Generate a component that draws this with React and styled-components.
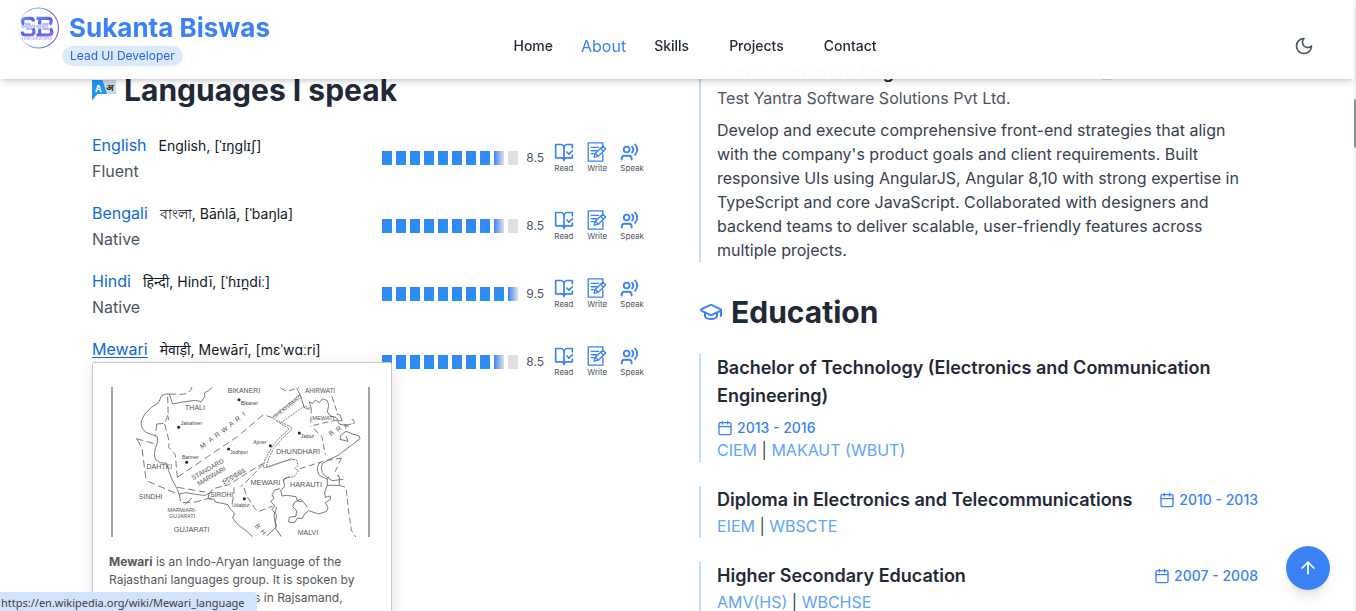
import React from 'react';
import styled, { createGlobalStyle, css } from 'styled-components';

const GlobalStyle = createGlobalStyle`
  *, *::before, *::after { box-sizing: border-box; }
  body { margin: 0; background: #fff; font-family: Inter, "Noto Sans", sans-serif; color: #1f2937; }
  h1, h2, h3, p, ul { margin: 0; padding: 0; }
  ul { list-style: none; }
  a { text-decoration: none; color: inherit; }
  button { border: 0; padding: 0; background: none; cursor: pointer; font: inherit; }
  svg { display: block; flex: none; }
`;

const Page = styled.div`
  position: relative;
  height: 100vh;
  overflow: hidden;
  padding-right: 6px;
`;

/* ---------- header ---------- */

const Header = styled.header`
  position: absolute;
  z-index: 10;
  top: 0;
  left: 0;
  right: 2px;
  height: 79px;
  padding: 0 40px 0 18px;
  display: grid;
  grid-template-columns: 1fr auto 1fr;
  background: rgba(255, 255, 255, 0.97);
  backdrop-filter: blur(16px);
  box-shadow: 0 4px 6px -1px rgba(0, 0, 0, 0.14), 0 2px 4px -2px rgba(0, 0, 0, 0.14);
`;

const Brand = styled.a`
  display: flex;
  align-items: flex-start;
  gap: 2px;
  padding-top: 7px;
`;

const BrandText = styled.div`
  display: flex;
  flex-direction: column;
  align-items: flex-start;
  gap: 2px;
  padding-top: 5px;
`;

const BrandName = styled.h1`
  padding-left: 7px;
  font-size: 26px;
  line-height: 32px;
  font-weight: 700;
  color: #3b82f6;
  white-space: nowrap;
`;

const RolePill = styled.span`
  padding: 0 8px;
  border-radius: 10px;
  background: #dbeafe;
  color: #2563eb;
  font-size: 12px;
  line-height: 20px;
  white-space: nowrap;
`;

const Nav = styled.nav`
  display: flex;
  align-items: center;
  gap: 40px;
  padding: 12px 0 0 58px;
`;

const NavLink = styled.a`
  font-size: 14px;
  font-weight: 500;
  color: #1f2937;
  ${(p) =>
    p.$active &&
    css`
      margin: 0 -12px;
      font-size: 16px;
      font-weight: 400;
      color: #3b82f6;
    `}
`;

const HeaderActions = styled.div`
  display: flex;
  align-items: center;
  justify-content: flex-end;
  padding-top: 13px;
`;

const IconButton = styled.button`
  color: #4b5563;
`;

/* ---------- layout ---------- */

const Main = styled.main`
  max-width: 1166px;
  margin: 0 auto;
  padding-top: 58px;
  display: grid;
  grid-template-columns: 1fr 1fr;
  gap: 48px;
`;

const Languages = styled.section`
  padding-top: 14px;
`;

const SectionTitle = styled.h2`
  display: flex;
  align-items: center;
  gap: 8px;
  margin-bottom: 24px;
  font-size: 30px;
  line-height: 36px;
  font-weight: 700;
  color: #1f2937;
`;

/* ---------- languages ---------- */

const LanguageList = styled.ul`
  display: flex;
  flex-direction: column;
  gap: 16px;
`;

const LanguageRow = styled.li`
  position: relative;
  display: flex;
  align-items: center;
  justify-content: space-between;
  padding-right: 7px;
  line-height: 26px;
`;

const LanguageName = styled.div`
  display: flex;
  align-items: baseline;
  gap: 12px;
  height: 26px;
`;

const LanguageLink = styled.a`
  color: #0d6ad8;
  text-decoration: ${(p) => (p.$hovered ? 'underline' : 'none')};
  text-underline-offset: 2px;
`;

const NativeName = styled.span`
  font-size: 14px;
  color: #111827;
  white-space: nowrap;
`;

const Level = styled.p`
  color: #4b5563;
`;

const Rating = styled.div`
  display: flex;
  align-items: center;
  gap: 8px;
`;

const Bars = styled.div`
  display: flex;
  gap: 4px;
`;

const fills = {
  full: 'linear-gradient(135deg, #3b82f6, #2196f3)',
  half: 'linear-gradient(90deg, #3b82f6, #e0e0e0)',
  empty: '#e0e0e0',
};

const Bar = styled.span`
  width: 10px;
  height: 14px;
  background: ${(p) => fills[p.$fill]};
`;

const Score = styled.span`
  width: 20px;
  font-size: 12px;
  color: #4b5563;
`;

const Skills = styled.div`
  display: flex;
  gap: 13px;
  padding-bottom: 2px;
`;

const Skill = styled.div`
  display: flex;
  flex-direction: column;
  gap: 1px;
  color: #3b82f6;
`;

const SkillLabel = styled.span`
  font-size: 8px;
  line-height: 10px;
  color: #4b5563;
`;

const Preview = styled.aside`
  position: absolute;
  z-index: 2;
  top: 26px;
  left: 0;
  width: 300px;
  padding: 24px 16px;
  border: 1px solid #c8ccd1;
  border-radius: 2px;
  background: #fff;
  box-shadow: 0 4px 16px rgba(0, 0, 0, 0.12);
`;

const PreviewText = styled.p`
  margin-top: 16px;
  font-size: 12px;
  line-height: 18px;
  color: #54595d;
`;

/* ---------- timeline ---------- */

const Timeline = styled.div`
  display: flex;
  flex-direction: column;
  gap: 24px;
`;

const Entry = styled.article`
  padding-left: 16px;
  border-left: 2px solid #bfdbfe;
  line-height: 24px;
`;

const EntryHead = styled.div`
  display: flex;
  flex-wrap: wrap;
  align-items: center;
  justify-content: space-between;
  gap: 8px;
`;

const EntryTitle = styled.h3`
  font-size: 18px;
  line-height: 28px;
  font-weight: 600;
  color: #1f2937;
`;

const Period = styled.span`
  display: flex;
  align-items: center;
  gap: 4px;
  font-size: 14px;
  line-height: 20px;
  font-weight: 500;
  color: #3b82f6;
`;

const Company = styled.p`
  color: #4b5563;
`;

const Description = styled.p`
  margin-top: 8px;
  color: #374151;
`;

const Institution = styled.p`
  color: #374151;
`;

const InstitutionLink = styled.a`
  color: #60a5fa;
`;

const EducationSection = styled.section`
  margin-top: 32px;
`;

/* ---------- overlays ---------- */

const ToTop = styled.button`
  position: absolute;
  z-index: 5;
  right: 26px;
  bottom: 21px;
  width: 44px;
  height: 44px;
  display: grid;
  place-items: center;
  border-radius: 50%;
  background: #3b82f6;
  color: #fff;
  box-shadow: 0 10px 15px -3px rgba(0, 0, 0, 0.1), 0 4px 6px -4px rgba(0, 0, 0, 0.1);
`;

const StatusBar = styled.div`
  position: absolute;
  z-index: 20;
  left: 0;
  bottom: 0;
  width: 257px;
  padding: 3px 0 0 1px;
  border-radius: 0 4px 0 0;
  background: #d3e3fd;
  color: #3c4043;
  font-family: "Noto Sans", sans-serif;
  font-size: 11px;
  line-height: 16px;
  white-space: nowrap;
`;

const ScrollTrack = styled.div`
  position: absolute;
  top: 0;
  right: 0;
  bottom: 0;
  width: 2px;
  padding-top: 99px;
  background: #f3f4f6;
`;

const ScrollThumb = styled.div`
  height: 49px;
  border-radius: 2px 0 0 2px;
  background: #8b93a1;
`;

/* ---------- drawings ---------- */

const Line = ({ size = 24, width = 2, children, ...rest }) => (
  <svg width={size} height={size} viewBox="0 0 24 24" fill="none" stroke="currentColor"
    strokeWidth={width} strokeLinecap="round" strokeLinejoin="round" aria-hidden="true" {...rest}>
    {children}
  </svg>
);

const Logo = () => (
  <svg width="42" height="42" viewBox="0 0 42 42" role="img" aria-label="SB">
    <defs>
      <linearGradient id="ring" x1="0" y1="0" x2="1" y2="0">
        <stop offset="0" stopColor="#e5e7eb" stopOpacity="0.3" />
        <stop offset="0.3" stopColor="#8f9cf5" />
        <stop offset="0.5" stopColor="#4cb4ea" />
        <stop offset="0.8" stopColor="#5b6cf3" />
        <stop offset="1" stopColor="#8b6ff0" />
      </linearGradient>
      <linearGradient id="mono" x1="0" y1="0" x2="1" y2="1">
        <stop offset="0" stopColor="#6f86f7" />
        <stop offset="0.5" stopColor="#4f63f0" />
        <stop offset="1" stopColor="#8a6cf2" />
      </linearGradient>
    </defs>
    <circle cx="20.5" cy="21" r="20" fill="#fff" stroke="url(#ring)" strokeWidth="1.2" />
    <g fill="none" stroke="url(#mono)" strokeWidth="3.2">
      <path d="M15.500 14.500q0-3.200-3-3.200H7.800q-3.200 0-3.200 3 0 2.400 1.400 3.200" />
      <path d="M4.200 24.500q0 3.500 3.200 3.500h5.400q3.200 0 3.200-3.200 0-2.500-1.300-3.300" />
      <path d="M18.500 11.300h12q2.700 0 2.700 2.700 0 2.200-1.600 3.400M21.700 12v5.500" />
      <path d="M18.500 28h12.400q2.900 0 2.900-3 0-2.500-1.600-3.500M21.700 21.500V28" />
    </g>
    <path d="M7 17h6M24.500 17h6M8 22h6M24.500 22h7" stroke="#6478f5" strokeWidth="1.2" />
    <text x="3" y="20.600" fontSize="3" fontWeight="700" fill="#8f9ff9">SUKANTA BISWAS</text>
    <text x="4" y="32.500" fontSize="3" fontWeight="600" fill="#9aa6f8">LEAD UI DEVELOPER</text>
  </svg>
);

const TranslateIcon = () => (
  <svg width="24" height="24" viewBox="0 0 24 24" aria-hidden="true">
    <path d="M9 2h15v14H12z" fill="#cfd8dc" />
    <path d="M0 2h10.500l4.500 14H5.500L0 22.500z" fill="#2196f3" />
    <text x="3" y="13.500" fontSize="9" fontWeight="700" fill="#fff">A</text>
    <text x="14" y="12.500" fontSize="9" fill="#263238" fontFamily='"Noto Sans", sans-serif'>अ</text>
  </svg>
);

const ReadIcon = () => (
  <Line size={20}>
    <path d="M12 22.500V7a4 4 0 0 0-4-4H2v16h7q3 0 3 3q0-3 3-3h7v-3" />
    <path d="M12 7a4 4 0 0 1 4-4h6v4" />
    <path d="m15.500 12 2.500 2.500 4-4" />
  </Line>
);

const WriteIcon = () => (
  <Line size={20} width={1.6}>
    <path d="M19 5.500V1H1.500v22H19v-9" />
    <path d="M5 6.500h9M5 10.500h7M5 14h4" />
    <path d="m10 13.500 9-8.500 3.500 3.500-9 8.500-5 1.500z" />
    <path d="m16.500 7.500 3.500 3.500M10 13.500l3.500 3.500" />
  </Line>
);

const SpeakIcon = () => (
  <Line size={20} width={2.2}>
    <circle cx="8" cy="9" r="3.500" />
    <path d="M2 21v-1q0-3.500 3.500-3.500h5q3.500 0 3.500 3.500v1" />
    <path d="M14.500 5.500q3 3.500 0 7M18 3q5.500 6 0 12.500" />
  </Line>
);

const CalendarIcon = () => (
  <Line size={16}>
    <path d="M8 2v4M16 2v4M3 10h18" />
    <rect x="3" y="4" width="18" height="18" rx="2" />
  </Line>
);

const CapIcon = () => (
  <Line size={24} style={{ color: '#3b82f6' }}>
    <path d="M21.420 10.922a1 1 0 0 0-.019-1.838L12.830 5.180a2 2 0 0 0-1.660 0L2.600 9.080a1 1 0 0 0 0 1.832l8.570 3.908a2 2 0 0 0 1.660 0z" />
    <path d="M22 10v6M6 12.500V16a6 3 0 0 0 12 0v-3.500" />
  </Line>
);

const regions = [
  [462, 100, 'BIKANERI', 21], [315, 150, 'THALI', 21], [690, 98, 'AHIRWATI', 19], [700, 181, 'MEWATI', 17],
  [624, 283, 'DHUNDHARI', 22], [526, 374, 'MEWARI', 22], [648, 382, 'HARAUTI', 22], [208, 328, 'DAHTKI', 21],
  [182, 416, 'SINDHI', 21], [395, 410, 'SIROHI', 20], [276, 457, 'MARWARI-', 17], [276, 473, 'GUJARATI', 16],
  [305, 516, 'GUJARATI', 22], [654, 524, 'MALVI', 21],
];
const towns = [
  [447, 119, 453, 134, 'Bikaner'], [266, 202, 272, 195, 'Jaisalmer'], [290, 307, 276, 297, 'Barmer'],
  [416, 267, 420, 283, 'Jodhpur'], [541, 257, 490, 252, 'Ajmer'], [628, 219, 632, 235, 'Jaipur'], [463, 416, 426, 440, 'Udaipur'],
];
const letters = [
  ['M', 343, 262], ['A', 366, 244], ['R', 385, 230], ['W', 407, 214], ['A', 428, 197], ['R', 447, 182], ['I', 465, 166],
  ['B', 728, 224], ['R', 750, 212], ['A', 772, 203], ['J', 793, 190], ['B', 498, 503], ['H', 515, 521],
];

const DialectMap = () => (
  <svg width="266" height="150" viewBox="57 81 798 450" role="img" aria-label="Map of Rajasthani dialects"
    fill="none" stroke="#666" strokeWidth="2.600" fontFamily='"Liberation Sans", sans-serif'>
    <path d="M66 81v450M837 81v450" strokeWidth="4" stroke="#777" />
    <path d="M238 102q-16-2-24 6l-8 20-22 14q-24 20-30 40-4 24 16 36l22 8 10 4v20l-6 16q-6 24 2 34l12 8 20 2 6 22 10 26 16 30 5 14" />
    <path d="M238 102l10 30 30-6 38-5 18 4 10-15v-12l12-6 12-11M268 402l20-4 34 6 24 2 14-8" />
    <path d="M238 102l34 1q28 0 34-22M233 110l2 70M200 192l24-2 12-32M200 192l-3 34M224 192l14 54-2 16 20 22 2 26 4 42" strokeDasharray="20 10" />
    <path d="M138 236l60 16M142 238l14 28 12 92 10 8 80 34M262 352l180-122 78-66 30 10M262 382l84 14M268 402l4 26 44-2 44-12 10 8" strokeDasharray="22 11" />
    <path d="M572 84l18 10 20-6 18-5M726 110l14 42M670 196l26-6 46-10M664 142l-2 58M672 206l24 26 10 52M754 294l-18 40 12 16M630 326l76-24 50-8M748 376l20 6 8 72 8 56 14 22" strokeDasharray="18 10" />
    <path d="M620 84l12 24 10 34 14 6 6-8-4-14 10 4 8-10 12 8 10-12 14 6 4 14-4 20 10 12 16 4 8 10 10 0-6-18-10-2M740 180l8 12 16 4 20-4" />
    <path d="M752 226l16-12 20 8 20 6 2 8-26 20-40 30-36 18-10 6q-10 20 6 36l22 16 34-4M752 226l-2 12 24 6-6-16" />
    <path d="M692 306q-18 16-4 40l24 12 4-8M712 358v18h36v-24l-6-6M712 376l-8 20 2 16 14-4 2 10-16 10 8 14-4 12-24 8-30-10-12 10-8 14-14-2-8 14-18-2 2-14 20-4 2-16-12-12 6-14 18-8 10 10 10 14" />
    <path d="M636 426l-14-4-4-12-28-4-14 2-4-18 12-10-4-22 18-8" />
    <path d="M356 404l-2 12 18 2 4 8 20 4 18 4 6 12 14 14-6 14 18 22 22 16 20 18M570 386l-16 4-8 14 6 12-10 8 12 14-8 10 14 18-4 20 4 14-30 28M556 504l18 26M560 440l-8 28 6 34" />
    <path d="M356 404l14-18 46-12 80-50 24-14M432 382v20l-6 30M520 312l-46 48-22 20M462 384l8 24 26 40 12 6 40-16" strokeDasharray="20 9" />
    <path d="M396 366l60-40 10 8-60 38z" strokeDasharray="8 6" />
    <path d="M548 172l84-70M572 188l72-50 12 4M550 176l56 26-2 8-32 30-22 26-14 30-8 28 76-28 16 4 4 16-10 10 12 6-14 18-26 4-6 10M560 184l38 22-34 32-20 26-20 36-4 24 70-22 26-4" strokeWidth="2.500" strokeDasharray="6 3" />
    <path d="M284 434l22-20" />
    {towns.map(([cx, cy, x, y, t]) => (
      <g key={t}>
        <circle cx={cx} cy={cy} r="4.500" fill="#222" stroke="none" />
        <text x={x} y={y} fontSize="15" fill="#444" stroke="none">{t}</text>
      </g>
    ))}
    <g fill="#555" stroke="none" textAnchor="middle">
      {regions.map(([x, y, t, s]) => (
        <text key={t + y} x={x} y={y} fontSize={s}>{t}</text>
      ))}
      {letters.map(([t, x, y]) => (
        <text key={x} fontSize="20" transform={`translate(${x} ${y}) rotate(${x > 490 && x < 520 ? 50 : -36})`}>{t}</text>
      ))}
      <text fontSize="20" transform="translate(356 334) rotate(-30)">STANDARD</text>
      <text fontSize="20" transform="translate(368 354) rotate(-30)">MARWARI</text>
      <text fontSize="15" transform="translate(434 352) rotate(-26)">GODWARI</text>
      <text fontSize="16" transform="translate(595 144) rotate(-38)">SHEKHAWATI</text>
    </g>
  </svg>
);

/* ---------- data ---------- */

const navItems = ['Home', 'About', 'Skills', 'Projects', 'Contact'];

const languages = [
  { name: 'English', native: 'English, [ˈɪŋglɪʃ]', level: 'Fluent', score: 8.5 },
  { name: 'Bengali', native: 'বাংলা, Bāṅlā, [ˈbaŋla]', level: 'Native', score: 8.5 },
  { name: 'Hindi', native: 'हिन्दी, Hindī, [ˈɦɪn̪diː]', level: 'Native', score: 9.5 },
  { name: 'Mewari', native: 'मेवाड़ी, Mewārī, [mɛˈwɑːri]', level: 'Native', score: 8.5, hovered: true },
];

const education = [
  { title: 'Bachelor of Technology (Electronics and Communication Engineering)', period: '2013 - 2016', places: ['CIEM', 'MAKAUT (WBUT)'] },
  { title: 'Diploma in Electronics and Telecommunications', period: '2010 - 2013', places: ['EIEM', 'WBSCTE'] },
  { title: 'Higher Secondary Education', period: '2007 - 2008', places: ['AMV(HS)', 'WBCHSE'] },
];

const skills = [['Read', ReadIcon], ['Write', WriteIcon], ['Speak', SpeakIcon]];

const fillOf = (i, score) => (i + 1 <= score ? 'full' : i < score ? 'half' : 'empty');

const Language = ({ name, native, level, score, hovered }) => (
  <LanguageRow>
    <div>
      <LanguageName>
        <LanguageLink href={`https://en.wikipedia.org/wiki/${name}_language`} $hovered={hovered}>{name}</LanguageLink>
        <NativeName>{native}</NativeName>
      </LanguageName>
      <Level>{level}</Level>
    </div>
    <Rating>
      <Bars>{Array.from({ length: 10 }, (_, i) => <Bar key={i} $fill={fillOf(i, score)} />)}</Bars>
      <Score>{score}</Score>
      <Skills>
        {skills.map(([label, Icon]) => (
          <Skill key={label}><Icon /><SkillLabel>{label}</SkillLabel></Skill>
        ))}
      </Skills>
    </Rating>
    {hovered && (
      <Preview>
        <DialectMap />
        <PreviewText>
          <b>Mewari</b> is an Indo-Aryan language of the Rajasthani languages group. It is spoken by
          about five million speakers in Rajsamand,
        </PreviewText>
      </Preview>
    )}
  </LanguageRow>
);

export default function App() {
  return (
    <Page>
      <GlobalStyle />
      <Header>
        <Brand href="#home">
          <Logo />
          <BrandText>
            <BrandName>Sukanta Biswas</BrandName>
            <RolePill>Lead UI Developer</RolePill>
          </BrandText>
        </Brand>
        <Nav>
          {navItems.map((n) => <NavLink key={n} href={`#${n.toLowerCase()}`} $active={n === 'About'}>{n}</NavLink>)}
        </Nav>
        <HeaderActions>
          <IconButton aria-label="Toggle dark mode">
            <Line size={20}><path d="M12 3a6 6 0 0 0 9 9 9 9 0 1 1-9-9Z" /></Line>
          </IconButton>
        </HeaderActions>
      </Header>

      <Main>
        <Languages>
          <SectionTitle><TranslateIcon />Languages I speak</SectionTitle>
          <LanguageList>{languages.map((l) => <Language key={l.name} {...l} />)}</LanguageList>
        </Languages>

        <div>
          <Entry>
            <EntryHead>
              <EntryTitle>Senior Software Engineer</EntryTitle>
              <Period><CalendarIcon />Dec 2018 - Nov 2021</Period>
            </EntryHead>
            <Company>Test Yantra Software Solutions Pvt Ltd.</Company>
            <Description>
              Develop and execute comprehensive front-end strategies that align with the company's product goals and
              client requirements. Built responsive UIs using AngularJS, Angular 8,10 with strong expertise in
              TypeScript and core JavaScript. Collaborated with designers and backend teams to deliver scalable,
              user-friendly features across multiple projects.
            </Description>
          </Entry>

          <EducationSection>
            <SectionTitle><CapIcon />Education</SectionTitle>
            <Timeline>
              {education.map((e) => (
                <Entry key={e.title}>
                  <EntryHead>
                    <EntryTitle>{e.title}</EntryTitle>
                    <Period><CalendarIcon />{e.period}</Period>
                  </EntryHead>
                  <Institution>
                    <InstitutionLink href="#education">{e.places[0]}</InstitutionLink>
                    {' | '}
                    <InstitutionLink href="#education">{e.places[1]}</InstitutionLink>
                  </Institution>
                </Entry>
              ))}
            </Timeline>
          </EducationSection>
        </div>
      </Main>

      <ToTop aria-label="Back to top">
        <Line size={20}><path d="m5 12 7-7 7 7M12 19V5" /></Line>
      </ToTop>
      <StatusBar>https://en.wikipedia.org/wiki/Mewari_language</StatusBar>
      <ScrollTrack><ScrollThumb /></ScrollTrack>
    </Page>
  );
}
